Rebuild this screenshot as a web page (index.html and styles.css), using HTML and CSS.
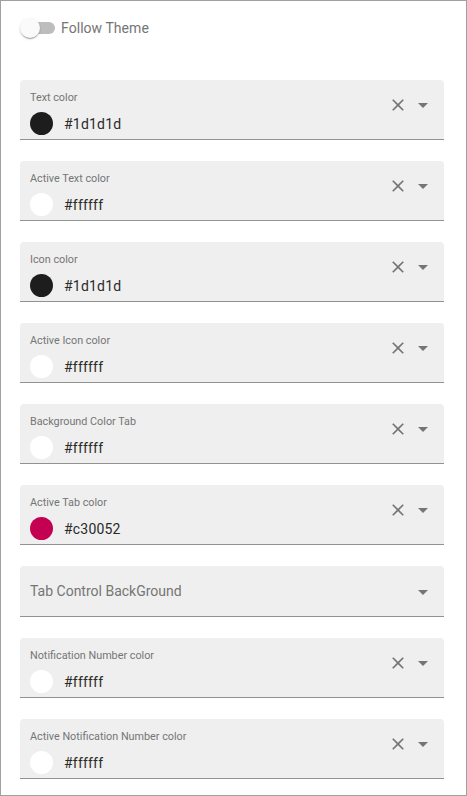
FILE: index.html
```html
<!DOCTYPE html>
<html>
<head>
<meta charset="utf-8">
<link rel="stylesheet" href="styles.css">
</head>
<body>
<div class="frame">
  <div class="toggle-row">
    <span class="toggle"><span class="track"></span><span class="thumb"></span></span>
    <span class="toggle-label">Follow Theme</span>
  </div>

  <div class="fields">
    <div class="field">
      <div class="field-main">
        <div class="label">Text color</div>
        <div class="value-row"><span class="swatch dark"></span><span class="value">#1d1d1d</span></div>
      </div>
      <div class="icons">
        <svg class="clear" viewBox="0 0 24 24"><path d="M19 6.41 17.59 5 12 10.59 6.41 5 5 6.41 10.59 12 5 17.59 6.41 19 12 13.41 17.59 19 19 17.59 13.41 12z"/></svg>
        <svg class="arrow" viewBox="0 0 10 5"><path d="M0 0h10L5 5z"/></svg>
      </div>
    </div>

    <div class="field">
      <div class="field-main">
        <div class="label">Active Text color</div>
        <div class="value-row"><span class="swatch white"></span><span class="value">#ffffff</span></div>
      </div>
      <div class="icons">
        <svg class="clear" viewBox="0 0 24 24"><path d="M19 6.41 17.59 5 12 10.59 6.41 5 5 6.41 10.59 12 5 17.59 6.41 19 12 13.41 17.59 19 19 17.59 13.41 12z"/></svg>
        <svg class="arrow" viewBox="0 0 10 5"><path d="M0 0h10L5 5z"/></svg>
      </div>
    </div>

    <div class="field">
      <div class="field-main">
        <div class="label">Icon color</div>
        <div class="value-row"><span class="swatch dark"></span><span class="value">#1d1d1d</span></div>
      </div>
      <div class="icons">
        <svg class="clear" viewBox="0 0 24 24"><path d="M19 6.41 17.59 5 12 10.59 6.41 5 5 6.41 10.59 12 5 17.59 6.41 19 12 13.41 17.59 19 19 17.59 13.41 12z"/></svg>
        <svg class="arrow" viewBox="0 0 10 5"><path d="M0 0h10L5 5z"/></svg>
      </div>
    </div>

    <div class="field">
      <div class="field-main">
        <div class="label">Active Icon color</div>
        <div class="value-row"><span class="swatch white"></span><span class="value">#ffffff</span></div>
      </div>
      <div class="icons">
        <svg class="clear" viewBox="0 0 24 24"><path d="M19 6.41 17.59 5 12 10.59 6.41 5 5 6.41 10.59 12 5 17.59 6.41 19 12 13.41 17.59 19 19 17.59 13.41 12z"/></svg>
        <svg class="arrow" viewBox="0 0 10 5"><path d="M0 0h10L5 5z"/></svg>
      </div>
    </div>

    <div class="field">
      <div class="field-main">
        <div class="label">Background Color Tab</div>
        <div class="value-row"><span class="swatch white"></span><span class="value">#ffffff</span></div>
      </div>
      <div class="icons">
        <svg class="clear" viewBox="0 0 24 24"><path d="M19 6.41 17.59 5 12 10.59 6.41 5 5 6.41 10.59 12 5 17.59 6.41 19 12 13.41 17.59 19 19 17.59 13.41 12z"/></svg>
        <svg class="arrow" viewBox="0 0 10 5"><path d="M0 0h10L5 5z"/></svg>
      </div>
    </div>

    <div class="field">
      <div class="field-main">
        <div class="label">Active Tab color</div>
        <div class="value-row"><span class="swatch magenta"></span><span class="value">#c30052</span></div>
      </div>
      <div class="icons">
        <svg class="clear" viewBox="0 0 24 24"><path d="M19 6.41 17.59 5 12 10.59 6.41 5 5 6.41 10.59 12 5 17.59 6.41 19 12 13.41 17.59 19 19 17.59 13.41 12z"/></svg>
        <svg class="arrow" viewBox="0 0 10 5"><path d="M0 0h10L5 5z"/></svg>
      </div>
    </div>

    <div class="field field-empty">
      <div class="placeholder">Tab Control BackGround</div>
      <svg class="arrow" viewBox="0 0 10 5"><path d="M0 0h10L5 5z"/></svg>
    </div>

    <div class="field">
      <div class="field-main">
        <div class="label">Notification Number color</div>
        <div class="value-row"><span class="swatch white"></span><span class="value">#ffffff</span></div>
      </div>
      <div class="icons">
        <svg class="clear" viewBox="0 0 24 24"><path d="M19 6.41 17.59 5 12 10.59 6.41 5 5 6.41 10.59 12 5 17.59 6.41 19 12 13.41 17.59 19 19 17.59 13.41 12z"/></svg>
        <svg class="arrow" viewBox="0 0 10 5"><path d="M0 0h10L5 5z"/></svg>
      </div>
    </div>

    <div class="field">
      <div class="field-main">
        <div class="label">Active Notification Number color</div>
        <div class="value-row"><span class="swatch white"></span><span class="value">#ffffff</span></div>
      </div>
      <div class="icons">
        <svg class="clear" viewBox="0 0 24 24"><path d="M19 6.41 17.59 5 12 10.59 6.41 5 5 6.41 10.59 12 5 17.59 6.41 19 12 13.41 17.59 19 19 17.59 13.41 12z"/></svg>
        <svg class="arrow" viewBox="0 0 10 5"><path d="M0 0h10L5 5z"/></svg>
      </div>
    </div>
  </div>
</div>
</body>
</html>
```

FILE: styles.css
```css
* { box-sizing: border-box; }

html, body {
  margin: 0;
  padding: 0;
  background: #ffffff;
}

body {
  font-family: Roboto, "Liberation Sans", sans-serif;
}

.frame {
  width: 467px;
  height: 796px;
  border: 1px solid #a0a0a0;
  padding: 17px 22px 0 19px;
  overflow: hidden;
}

.toggle-row {
  display: flex;
  align-items: center;
  height: 20px;
}

.toggle {
  position: relative;
  width: 35px;
  height: 20px;
  flex: none;
}

.track {
  position: absolute;
  left: 1px;
  top: 4px;
  width: 34px;
  height: 12px;
  border-radius: 6px;
  background: #bdbdbd;
}

.thumb {
  position: absolute;
  left: 0;
  top: 0;
  width: 20px;
  height: 20px;
  border-radius: 50%;
  background: #fafafa;
  box-shadow: 0 2px 1px -1px rgba(0,0,0,.2), 0 1px 1px 0 rgba(0,0,0,.14), 0 1px 3px 0 rgba(0,0,0,.12);
}

.toggle-label {
  margin-left: 6px;
  font-size: 14px;
  color: #757575;
  letter-spacing: 0.05px;
}

.fields {
  margin-top: 42px;
  display: flex;
  flex-direction: column;
  gap: 21px;
}

.field {
  display: flex;
  height: 60px;
  background: #efefef;
  border-radius: 4px 4px 0 0;
  border-bottom: 1px solid #929292;
  padding: 0 16px 0 10px;
}

.field-main {
  flex: 1;
  display: flex;
  flex-direction: column;
  padding-top: 11px;
}

.label {
  height: 14px;
  line-height: 14px;
  font-size: 10.8px;
  color: #757575;
}

.value-row {
  margin-top: 6px;
  height: 25px;
  display: flex;
  align-items: center;
}

.swatch {
  width: 23px;
  height: 23px;
  border-radius: 50%;
  flex: none;
}

.swatch.dark { background: #1d1d1d; }
.swatch.white { background: #ffffff; }
.swatch.magenta { background: #c30052; }

.value {
  margin-left: 11px;
  font-size: 14px;
  color: #2a2a2a;
  letter-spacing: 0.2px;
}

.icons {
  display: flex;
  align-items: center;
  height: 20px;
  margin-top: 15px;
}

.clear {
  width: 20px;
  height: 20px;
  fill: #757575;
}

.arrow {
  width: 10px;
  height: 5px;
  fill: #757575;
  margin-left: 10px;
}

.field-empty {
  height: 51px;
  align-items: center;
}

.placeholder {
  flex: 1;
  font-size: 14px;
  color: #757575;
}

.field-empty .arrow {
  margin-top: 2px;
}
```
